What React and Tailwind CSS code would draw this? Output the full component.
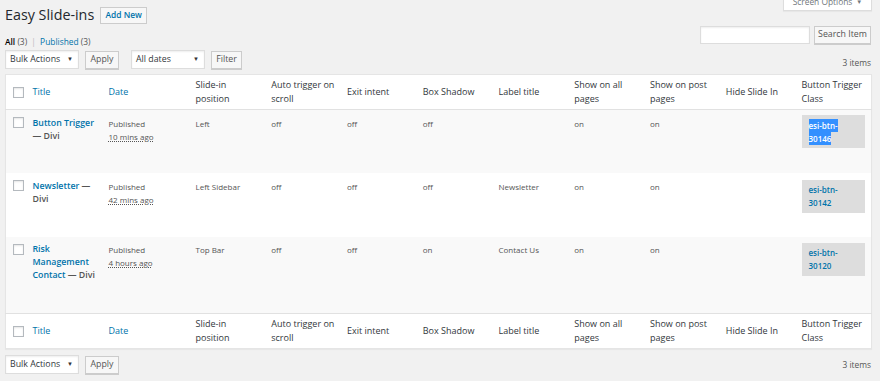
import React from "react";

const Check = () => (
  <span className="block w-[11px] h-[11px] bg-white border border-[#b4b9be] shadow-[inset_0_1px_2px_rgba(0,0,0,0.1)]" />
);

const Select = ({ label, w }) => (
  <div className={`${w} h-[19px] bg-white border border-[#ddd] shadow-[inset_0_1px_2px_rgba(0,0,0,0.07)] flex items-center justify-between pl-[4px] pr-[5px] text-[8.8px] text-[#32373c]`}>
    <span>{label}</span>
    <span className="text-[6px] text-[#333]">▼</span>
  </div>
);

const Btn = ({ children, cls = "" }) => (
  <div className={`h-[18px] bg-[#f7f7f7] border border-[#ccc] shadow-[0_1px_0_#ccc] flex items-center justify-center text-[8.8px] text-[#555] ${cls}`}>
    {children}
  </div>
);

const headers = [
  { t: ["Title"], link: true },
  { t: ["Date"], link: true },
  { t: ["Slide-in", "position"] },
  { t: ["Auto trigger on", "scroll"] },
  { t: ["Exit intent"] },
  { t: ["Box Shadow"] },
  { t: ["Label title"] },
  { t: ["Show on all", "pages"] },
  { t: ["Show on post", "pages"] },
  { t: ["Hide Slide In"] },
  { t: ["Button Trigger", "Class"] },
];

const rows = [
  {
    title: "Button Trigger",
    ago: "10 mins ago",
    pos: "Left",
    auto: "off",
    exit: "off",
    shadow: "off",
    label: "",
    all: "on",
    post: "on",
    cls: ["esi-btn-", "30146"],
    sel: true,
    bg: "bg-[#f9f9f9]",
    h: "h-[63px]",
    pt: "pt-[6.5px]",
    bpt: "pt-[5px]",
  },
  {
    title: "Newsletter",
    ago: "42 mins ago",
    pos: "Left Sidebar",
    auto: "off",
    exit: "off",
    shadow: "off",
    label: "Newsletter",
    all: "on",
    post: "on",
    cls: ["esi-btn-", "30142"],
    bg: "bg-white",
    h: "h-[64px]",
    pt: "pt-[7px]",
    bpt: "pt-[7px]",
  },
  {
    title: "Risk Management Contact",
    ago: "4 hours ago",
    pos: "Top Bar",
    auto: "off",
    exit: "off",
    shadow: "on",
    label: "Contact Us",
    all: "on",
    post: "on",
    cls: ["esi-btn-", "30120"],
    bg: "bg-[#f9f9f9]",
    h: "h-[77px]",
    pt: "pt-[6px]",
    bpt: "pt-[6px]",
  },
];

const HeadRow = ({ top }) => (
  <tr className="h-[35px]">
    <th className={`pl-[7px] pr-0 align-middle ${top ? "border-b border-[#e1e1e1]" : "border-t border-[#e1e1e1]"}`}>
      <Check />
    </th>
    {headers.map((h) => (
      <th
        key={h.t.join(" ")}
        className={`text-left font-normal text-[9px] leading-[14px] pl-[7px] pr-[1px] align-middle whitespace-nowrap ${h.link ? "text-[#0073aa]" : "text-[#32373c]"} ${top ? "border-b border-[#e1e1e1]" : "border-t border-[#e1e1e1]"}`}
      >
        {h.t.map((l, i) => (
          <div key={i}>{l}</div>
        ))}
      </th>
    ))}
  </tr>
);

const Cell = ({ children, pt }) => (
  <td className={`align-top pl-[7px] pr-[2px] ${pt} text-[8px] leading-[13px] text-[#555]`}>{children}</td>
);

export default function App() {
  return (
    <div className="relative w-[880px] h-[381px] overflow-hidden bg-[#f1f1f1] font-['Open_Sans','Noto_Sans',sans-serif] pl-[5px] pr-[9px] pt-[7px]">
      <div className="absolute right-[8px] top-[-7px] w-[89px] h-[18px] bg-white border border-[#ddd] shadow-[0_1px_1px_rgba(0,0,0,0.04)] flex items-center justify-center text-[8.4px] text-[#72777c]">
        Screen Options <span className="ml-[4px] text-[6px]">▼</span>
      </div>

      <div className="flex items-center h-[17px]">
        <h1 className="text-[14.3px] text-[#23282d] leading-none font-normal">Easy Slide-ins</h1>
        <div className="ml-[6px] h-[17px] w-[47px] bg-[#f7f7f7] border border-[#ccc] flex items-center justify-center text-[8.4px] font-semibold text-[#0073aa]">
          Add New
        </div>
      </div>

      <div className="mt-[2px] flex justify-between h-[18px]">
        <div className="pt-[9px] text-[8.4px] leading-[13px] text-[#555]">
          <span className="font-semibold text-[#000]">All</span> (3) <span className="text-[#bbb] mx-[2px]">|</span>{" "}
          <span className="text-[#0073aa]">Published</span> (3)
        </div>
        <div className="flex items-center">
          <div className="w-[110px] h-[18px] bg-white border border-[#ddd] shadow-[inset_0_1px_2px_rgba(0,0,0,0.07)]" />
          <Btn cls="ml-[4px] w-[57px]">Search Item</Btn>
        </div>
      </div>

      <div className="mt-[6px] flex justify-between h-[19px]">
        <div className="flex items-start">
          <Select label="Bulk Actions" w="w-[74px]" />
          <Btn cls="ml-[6px] w-[34px] mt-[1px]">Apply</Btn>
          <Select label="All dates" w="w-[74px] ml-[12px]" />
          <Btn cls="ml-[6px] w-[31px] mt-[1px]">Filter</Btn>
        </div>
        <div className="self-end text-[8.4px] leading-[13px] text-[#555]">3 items</div>
      </div>

      <table className="mt-[5px] table-fixed border-collapse w-[866px] bg-white border border-[#e5e5e5] shadow-[0_1px_1px_rgba(0,0,0,0.04)]">
        <colgroup>
          <col className="w-[20px]" />
          <col className="w-[76px]" />
          <col className="w-[87px]" />
          <col className="w-[75.75px]" />
          <col className="w-[75.75px]" />
          <col className="w-[75.75px]" />
          <col className="w-[75.75px]" />
          <col className="w-[75.75px]" />
          <col className="w-[75.75px]" />
          <col className="w-[75.75px]" />
          <col className="w-[75.75px]" />
          <col className="w-[77px]" />
        </colgroup>
        <thead>
          <HeadRow top />
        </thead>
        <tbody>
          {rows.map((r) => (
            <tr key={r.title} className={`${r.bg} ${r.h}`}>
              <td className="align-top pl-[7px] pt-[7px]">
                <Check />
              </td>
              <td className={`align-top pl-[7px] pr-[1px] ${r.pt} text-[8.8px] leading-[13px]`}>
                <span className="font-semibold text-[#0073aa]">{r.title}</span>
                <span className="font-semibold text-[#555]"> — Divi</span>
              </td>
              <Cell pt={r.pt}>
                Published
                <br />
                <span className="underline decoration-dotted underline-offset-1">{r.ago}</span>
              </Cell>
              <Cell pt={r.pt}>{r.pos}</Cell>
              <Cell pt={r.pt}>{r.auto}</Cell>
              <Cell pt={r.pt}>{r.exit}</Cell>
              <Cell pt={r.pt}>{r.shadow}</Cell>
              <Cell pt={r.pt}>{r.label}</Cell>
              <Cell pt={r.pt}>{r.all}</Cell>
              <Cell pt={r.pt}>{r.post}</Cell>
              <Cell pt={r.pt}></Cell>
              <td className={`align-top pl-[7px] ${r.bpt}`}>
                <div className="w-[63px] bg-[#dddddd] px-[7px] py-[3.5px] text-[8px] leading-[13px] font-semibold text-[#0073aa]">
                  {r.sel ? (
                    <>
                      <span className="inline-block bg-[#3390ff] text-white">{r.cls[0]}</span>
                      <br />
                      <span className="inline-block bg-[#3390ff] text-white">{r.cls[1]}</span>
                    </>
                  ) : (
                    <>
                      {r.cls[0]}
                      <br />
                      {r.cls[1]}
                    </>
                  )}
                </div>
              </td>
            </tr>
          ))}
        </tbody>
        <tfoot>
          <HeadRow />
        </tfoot>
      </table>

      <div className="mt-[6px] flex justify-between h-[19px]">
        <div className="flex items-start">
          <Select label="Bulk Actions" w="w-[74px]" />
          <Btn cls="ml-[6px] w-[34px] mt-[1px]">Apply</Btn>
        </div>
        <div className="self-center text-[8.4px] leading-[13px] text-[#555]">3 items</div>
      </div>
    </div>
  );
}
